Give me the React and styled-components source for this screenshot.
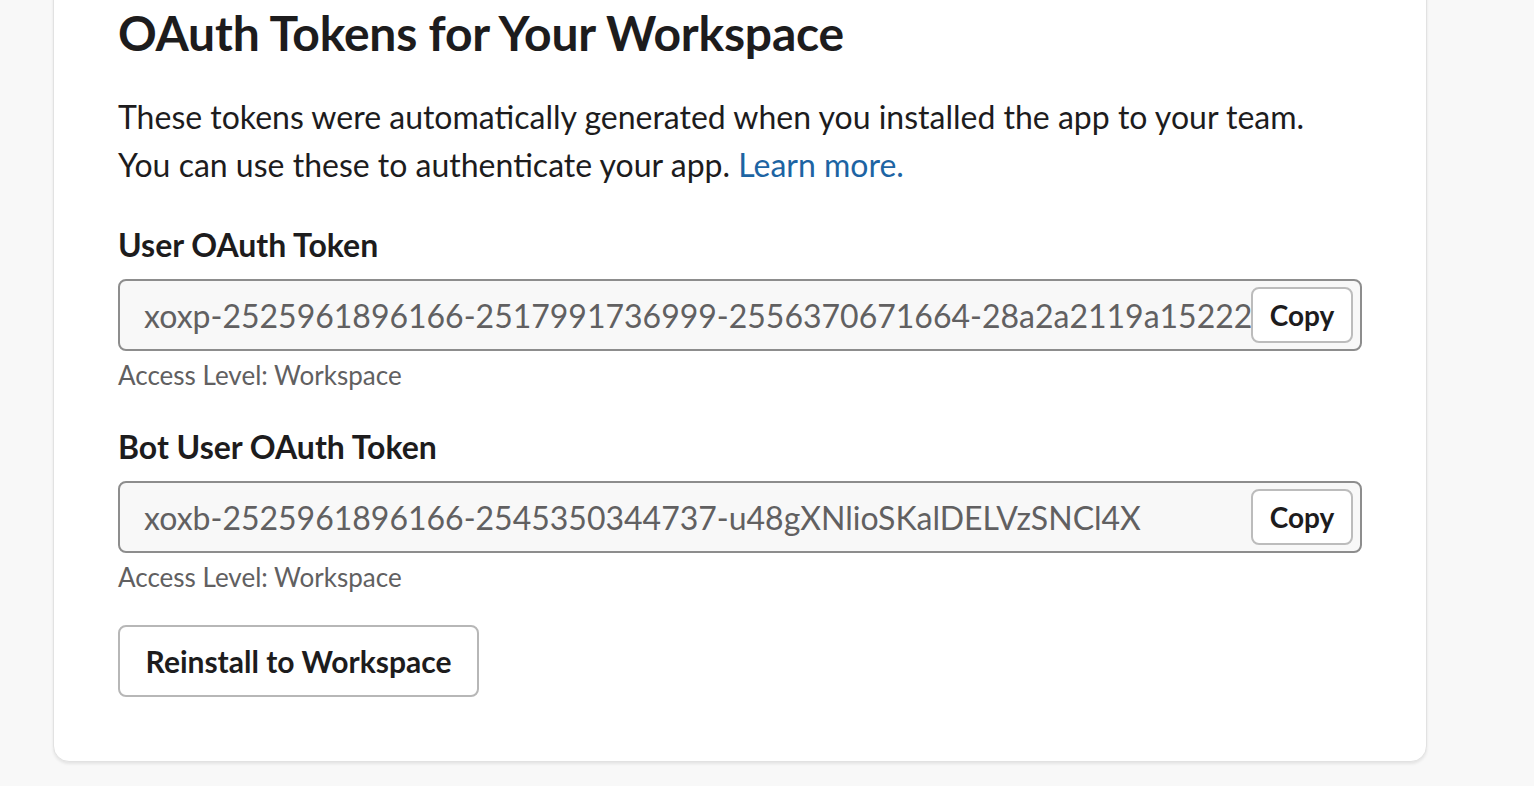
import React from "react";
import styled, { createGlobalStyle } from "styled-components";

const Global = createGlobalStyle`
  html, body { margin: 0; padding: 0; background: #f8f8f8; }
  body { font-family: Lato, "Noto Sans", sans-serif; color: #1d1c1d; }
`;

const Page = styled.div`
  display: flow-root;
  padding: 0 107px 24px 53px;
`;

const Card = styled.section`
  margin-top: -40px;
  background: #fff;
  border: 1px solid #e2e2e2;
  border-radius: 16px;
  box-shadow: 0 2px 3px rgba(0, 0, 0, 0.08);
  padding: 44px 64px 64px;
  display: flex;
  flex-direction: column;
`;

const Title = styled.h2`
  margin: 0;
  font-size: 48px;
  font-weight: 700;
  line-height: 56px;
  letter-spacing: -0.2px;
`;

const Intro = styled.p`
  margin: 32px 0 0;
  font-size: 32px;
  line-height: 48px;
`;

const Link = styled.a`
  color: #1d64a3;
  text-decoration: none;
`;

const Field = styled.div`
  display: flex;
  flex-direction: column;
  margin-top: ${(p) => p.$top}px;
`;

const Label = styled.label`
  font-size: 32px;
  font-weight: 700;
  line-height: 40px;
  margin-bottom: 14px;
`;

const TokenBox = styled.div`
  display: flex;
  align-items: center;
  height: 72px;
  box-sizing: border-box;
  border: 2px solid #8d8d8d;
  border-radius: 8px;
  background: #f8f8f8;
  padding: 0 7px 0 24px;
`;

const TokenText = styled.span`
  flex: 1;
  min-width: 0;
  overflow: hidden;
  white-space: nowrap;
  font-size: 32px;
  color: #616061;
`;

const CopyButton = styled.button`
  flex: none;
  width: 102px;
  height: 56px;
  border: 2px solid #bcbcbc;
  border-radius: 8px;
  background: #fff;
  font-family: inherit;
  font-size: 28px;
  font-weight: 700;
  color: #1d1c1d;
  padding: 0;
`;

const Hint = styled.div`
  font-size: 26px;
  line-height: 32px;
  color: #616061;
  margin-top: 8px;
`;

const Reinstall = styled.button`
  align-self: flex-start;
  margin-top: 32px;
  width: 361px;
  height: 72px;
  border: 2px solid #b7b7b7;
  border-radius: 8px;
  background: #fff;
  font-family: inherit;
  font-size: 30px;
  font-weight: 700;
  color: #1d1c1d;
  padding: 0;
`;

const tokens = [
  {
    label: "User OAuth Token",
    value: "xoxp-2525961896166-2517991736999-2556370671664-28a2a2119a15222b7e3f0c1d",
    top: 36,
  },
  {
    label: "Bot User OAuth Token",
    value: "xoxb-2525961896166-2545350344737-u48gXNlioSKalDELVzSNCl4X",
    top: 36,
  },
];

export default function App() {
  return (
    <>
      <Global />
      <Page>
        <Card>
          <Title>OAuth Tokens for Your Workspace</Title>
          <Intro>
            These tokens were automatically generated when you installed the app to your team.
            <br />
            You can use these to authenticate your app. <Link href="#">Learn more.</Link>
          </Intro>
          {tokens.map((t) => (
            <Field key={t.label} $top={t.top}>
              <Label>{t.label}</Label>
              <TokenBox>
                <TokenText>{t.value}</TokenText>
                <CopyButton>Copy</CopyButton>
              </TokenBox>
              <Hint>Access Level: Workspace</Hint>
            </Field>
          ))}
          <Reinstall>Reinstall to Workspace</Reinstall>
        </Card>
      </Page>
    </>
  );
}
